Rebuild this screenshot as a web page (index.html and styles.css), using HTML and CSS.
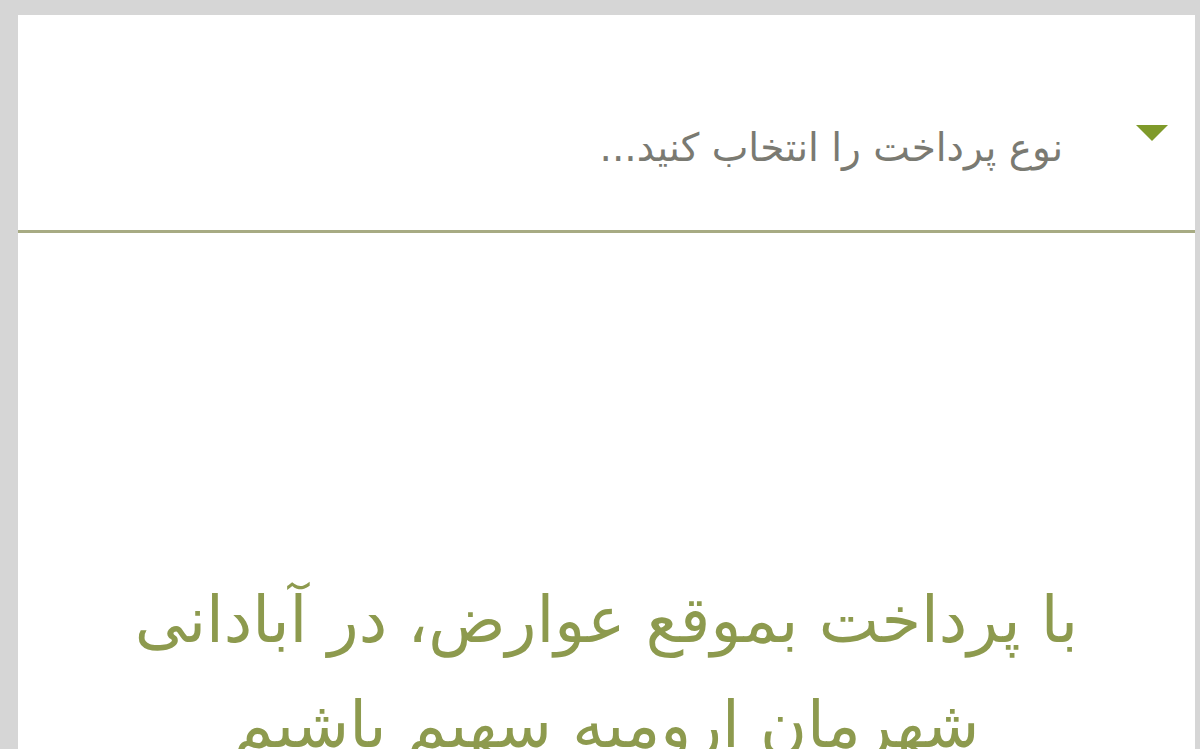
FILE: index.html
```html
<!DOCTYPE html>
<html lang="fa" dir="rtl">
<head>
<meta charset="utf-8">
<link rel="stylesheet" href="styles.css">
</head>
<body>
<div class="frame">
  <div class="panel">
    <div class="select">
      <svg class="caret" width="34" height="20" viewBox="0 0 34 20"><polygon points="1,2 33,2 17,18" fill="#7f9a2a"/></svg>
      <span class="placeholder">نوع پرداخت را انتخاب کنید...</span>
    </div>
    <div class="message">
      <p>با پرداخت بموقع عوارض، در آبادانی<br>شهرمان ارومیه سهیم باشیم</p>
    </div>
  </div>
</div>
</body>
</html>
```
FILE: styles.css
```css
html, body {
  margin: 0;
  padding: 0;
  height: 100%;
  overflow: hidden;
}
body {
  background: #d6d6d6;
  font-family: "DejaVu Sans", "Noto Sans", sans-serif;
}
.frame {
  padding: 15px 5px 0 18px;
  height: 100%;
  box-sizing: border-box;
}
.panel {
  background: #ffffff;
  height: 100%;
}
.select {
  height: 215px;
  border-bottom: 3px solid #a7ab83;
  display: flex;
  align-items: center;
  padding-right: 26px;
  gap: 72px;
}
.caret {
  margin-top: 20px;
}
.placeholder {
  font-size: 39px;
  color: #7a7a72;
  margin-top: 50px;
}
.message {
  text-align: center;
  padding-top: 335px;
}
.message p {
  margin: 0;
  font-size: 64px;
  line-height: 105px;
  color: #8d9a4e;
}
```
